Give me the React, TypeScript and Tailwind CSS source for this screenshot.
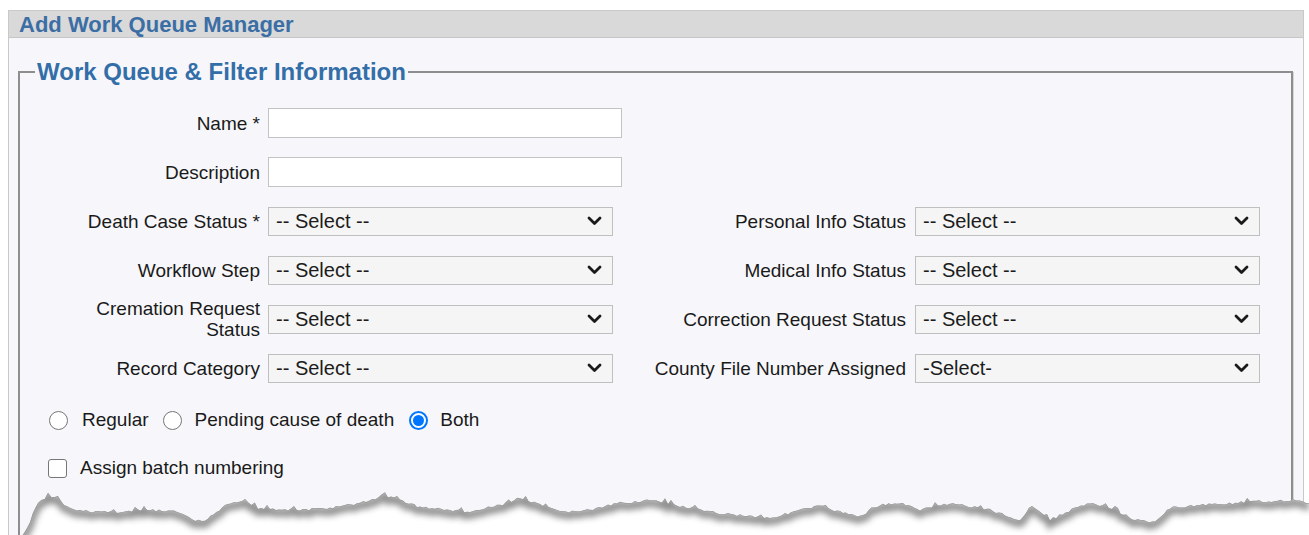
import React from 'react';

const font = { fontFamily: '"Liberation Sans", Arial, sans-serif' };

// Jagged torn-paper edge along the bottom of the form
const tearPoints: [number, number][] = [
  [0, 540], [22, 536], [30, 523], [38, 502], [48, 497], [58, 497], [64, 506], [80, 511],
  [120, 512], [150, 510], [180, 512], [192, 520], [205, 521], [225, 506], [245, 500],
  [258, 508], [300, 510], [330, 508], [360, 503], [385, 496], [400, 500], [420, 507],
  [450, 510], [470, 512], [500, 505], [520, 498], [540, 505], [560, 512], [590, 510],
  [620, 503], [650, 500], [680, 506], [710, 512], [740, 515], [770, 518], [800, 510],
  [820, 506], [840, 512], [860, 516], [880, 505], [900, 503], [920, 510], [950, 503],
  [990, 510], [1020, 520], [1032, 505], [1050, 520], [1075, 508], [1090, 503], [1115, 510],
  [1135, 520], [1155, 522], [1170, 508], [1200, 505], [1250, 502], [1290, 500], [1309, 503],
];

const buildEdge = () => {
  let seed = 7;
  const rand = () => {
    seed = (seed * 9301 + 49297) % 233280;
    return seed / 233280;
  };
  const pts: string[] = [];
  for (let i = 0; i < tearPoints.length - 1; i++) {
    const [x0, y0] = tearPoints[i];
    const [x1, y1] = tearPoints[i + 1];
    const steps = Math.max(1, Math.round((x1 - x0) / 3));
    for (let s = 0; s < steps; s++) {
      const t = s / steps;
      const jitter = (rand() - 0.5) * 2.5 + (rand() > 0.94 ? -3.5 : 0);
      pts.push(`${(x0 + (x1 - x0) * t).toFixed(1)},${(y0 + (y1 - y0) * t + jitter).toFixed(1)}`);
    }
  }
  pts.push('1309,503');
  return pts;
};

const edgePts = buildEdge();
const edgeLine = 'M' + edgePts.join(' L');
const lowerShape = edgeLine + ' L1309,540 L0,540 Z';

const TornEdge = () => (
  <svg className="absolute left-0 top-[470px]" width={1309} height={65} viewBox="0 470 1309 65">
    <defs>
      <clipPath id="below-tear">
        <path d={lowerShape} />
      </clipPath>
      <filter id="tear-soft" x="-5%" y="-100%" width="110%" height="300%">
        <feGaussianBlur stdDeviation="3.2" />
      </filter>
    </defs>
    <path d={lowerShape} fill="#ffffff" />
    <g clipPath="url(#below-tear)">
      <path d={edgeLine} transform="translate(0,3)" stroke="#7a7a7a" strokeWidth={8} fill="none" filter="url(#tear-soft)" opacity={0.85} />
      <path d={edgeLine} stroke="#9a9a9a" strokeWidth={1.2} fill="none" />
    </g>
  </svg>
);

const Chevron = () => (
  <svg width="15" height="10" viewBox="0 0 15 10" className="pointer-events-none absolute right-[10px] top-1/2 -translate-y-1/2">
    <path d="M2 2 L7.5 7.5 L13 2" stroke="#1a1a1a" strokeWidth="2.8" fill="none" strokeLinecap="round" strokeLinejoin="round" />
  </svg>
);

const Select = ({ value }: { value: string }) => (
  <div className="relative w-[345px] h-[29px] bg-[#f5f5f5] border border-[#bfbfbf] flex items-center">
    <span className="pl-[7px] text-[20px] leading-[22px] text-[#1c1c1c]">{value}</span>
    <Chevron />
  </div>
);

const Label = ({ children, w }: { children: React.ReactNode; w: string }) => (
  <div className={`${w} text-right text-[19px] leading-[21px] text-[#1a1a1a]`}>{children}</div>
);

const Radio = ({ checked }: { checked?: boolean }) =>
  checked ? (
    <span className="shrink-0 w-[19px] h-[19px] rounded-full border-2 border-[#0075ff] bg-white flex items-center justify-center">
      <span className="w-[11px] h-[11px] rounded-full bg-[#0075ff]" />
    </span>
  ) : (
    <span className="shrink-0 block w-[19px] h-[19px] rounded-full border border-[#767676] bg-white" />
  );

const rows: { left: React.ReactNode; right?: string; rightValue?: string }[] = [
  { left: 'Death Case Status *', right: 'Personal Info Status', rightValue: '-- Select --' },
  { left: 'Workflow Step', right: 'Medical Info Status', rightValue: '-- Select --' },
  { left: <>Cremation Request<br />Status</>, right: 'Correction Request Status', rightValue: '-- Select --' },
  { left: 'Record Category', right: 'County File Number Assigned', rightValue: '-Select-' },
];

export default function App() {
  return (
    <div className="relative w-[1309px] h-[535px] bg-white overflow-hidden" style={font}>
      <div className="ml-[8px] mt-[10px] w-[1296px] border border-[#c9c9c9]">
        <div className="h-[27px] bg-[#d9d9d9] border-b border-[#c6c6c6] pl-[10px] pt-[1px] flex items-center">
          <h1 className="text-[22px] font-bold text-[#3a6ea5] leading-none">Add Work Queue Manager</h1>
        </div>

        <div className="bg-[#f7f7fb] pt-[20px] pl-[9px] pr-[10px] pb-[40px]">
          <fieldset className="border-2 border-[#8e8e8e] shadow-[1px_1px_0_#d6d6d6] h-[500px]">
            <legend className="ml-[15px] px-[2px] text-[24px] leading-[28px] font-bold text-[#336ea8]">
              Work Queue &amp; Filter Information
            </legend>

            <div className="pt-[22px] flex flex-col gap-[19px]">
              <div className="flex items-center h-[30px]">
                <Label w="w-[240px]">Name *</Label>
                <input className="ml-[8px] w-[354px] h-[30px] bg-white border border-[#c3c3c3] outline-none" />
              </div>
              <div className="flex items-center h-[30px]">
                <Label w="w-[240px]">Description</Label>
                <input className="ml-[8px] w-[354px] h-[30px] bg-white border border-[#c3c3c3] outline-none" />
              </div>

              {rows.map((r, i) => (
                <div key={i} className="flex items-center h-[30px]">
                  <Label w="w-[240px]">{r.left}</Label>
                  <div className="ml-[8px] w-[354px]">
                    <Select value="-- Select --" />
                  </div>
                  <Label w="w-[284px]">{r.right}</Label>
                  <div className="ml-[9px]">
                    <Select value={r.rightValue ?? ''} />
                  </div>
                </div>
              ))}
            </div>

            <div className="mt-[25px] pl-[29px] flex items-center h-[24px] text-[19px] text-[#1a1a1a]">
              <Radio />
              <span className="ml-[14px]">Regular</span>
              <span className="ml-[14px] flex"><Radio /></span>
              <span className="ml-[13px]">Pending cause of death</span>
              <span className="ml-[15px] flex"><Radio checked /></span>
              <span className="ml-[12px]">Both</span>
            </div>

            <div className="mt-[24px] pl-[28px] flex items-center h-[24px] text-[19px] text-[#1a1a1a]">
              <span className="w-[19px] h-[19px] rounded-[3px] border border-[#767676] bg-white" />
              <span className="ml-[13px]">Assign batch numbering</span>
            </div>
          </fieldset>
        </div>
      </div>

      <TornEdge />
    </div>
  );
}
